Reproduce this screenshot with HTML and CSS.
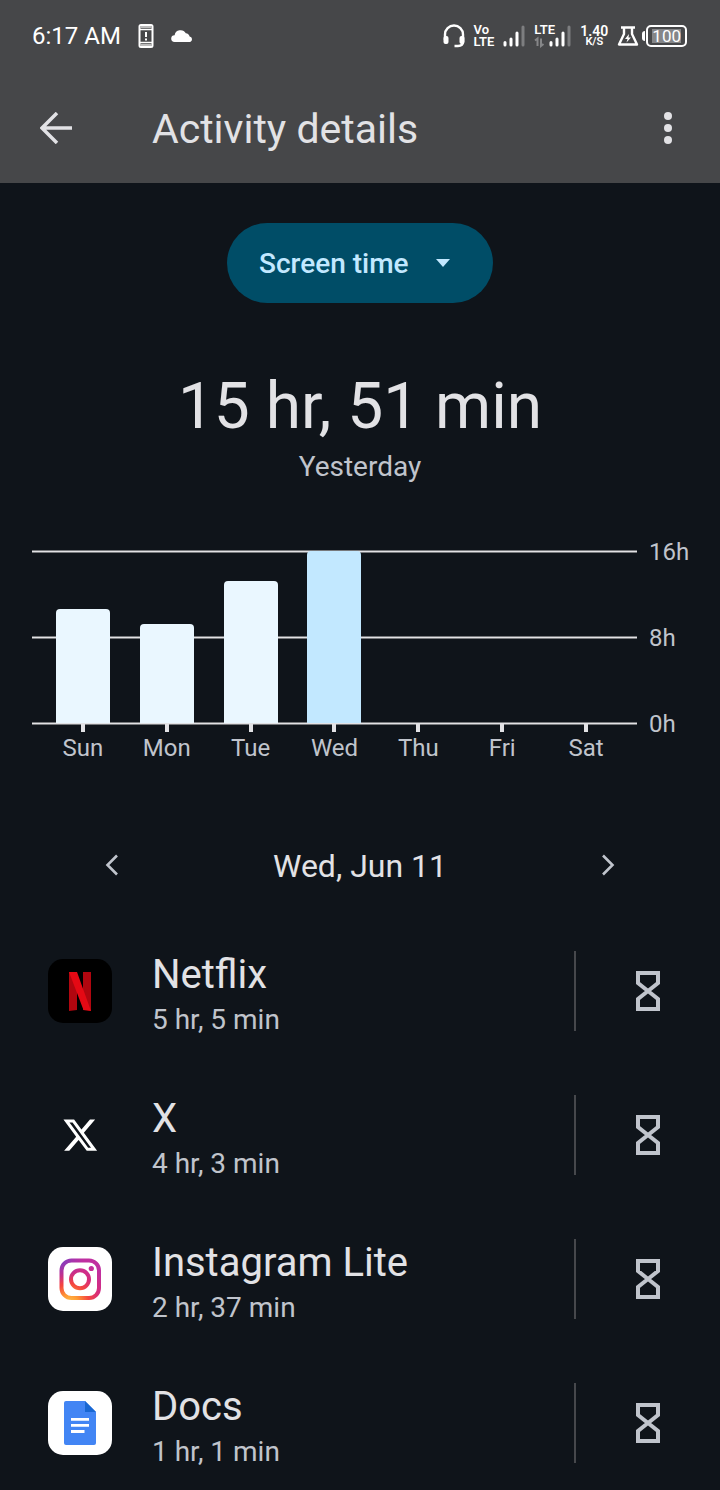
FILE: index.html
```html
<!DOCTYPE html>
<html lang="en">
<head>
<meta charset="utf-8">
<meta name="viewport" content="width=device-width, initial-scale=1">
<title>Activity details</title>
<link rel="stylesheet" href="styles.css">
</head>
<body>
<svg class="sprite" aria-hidden="true">
  <symbol id="hourglass" viewBox="0 0 26 42">
    <path d="M3 3H23V13L13 21L3 13ZM3 39H23V29L13 21L3 29Z" fill="none" stroke="currentColor" stroke-width="4"/>
  </symbol>
</svg>

<header class="top">
  <div class="status">
    <span class="clock">6:17 AM</span>
    <svg class="phone-alert" width="16" height="24" viewBox="0 0 16 24" aria-hidden="true">
      <rect x="1.500" y="1" width="13" height="22" rx="1.500" fill="none" stroke="#fff" stroke-width="2"/>
      <path d="M2 3H14M2 21H14" stroke="#bbb" stroke-width="2"/>
      <path d="M2 5.500H14M2 18.500H14" stroke="#fff" stroke-width="1.500"/>
      <path d="M8 8V13M8 14.500V16.500" stroke="#fff" stroke-width="2"/>
    </svg>
    <svg width="22" height="14" viewBox="0 0 22 14" aria-hidden="true">
      <path d="M3.600 13A3.400 3.400 0 0 1 3.600 6.200A6 6 0 0 1 14.800 4.300A4.300 4.300 0 0 1 18.600 7.600A2.800 2.800 0 0 1 19.200 13Z" fill="#fff"/>
    </svg>
    <div class="indicators">
      <svg width="22" height="24" viewBox="0 0 22 24" aria-hidden="true">
        <path d="M2 16V10.500A9 9 0 0 1 20 10.500V17.500Q20 22 15 22H11.500" fill="none" stroke="#fff" stroke-width="2.400"/>
        <rect x="0.500" y="12" width="5" height="8" rx="2" fill="#fff"/>
        <rect x="16.500" y="12" width="5" height="8" rx="2" fill="#fff"/>
      </svg>
      <span class="stack volte"><span>Vo</span><span>LTE</span></span>
      <svg width="22" height="22" viewBox="0 0 22 22" aria-hidden="true">
        <path d="M2 17.500V20M8 14V20M14 8V20" stroke="#fff" stroke-width="3" stroke-linecap="round"/>
        <path d="M20 2V20" stroke="#7d7e80" stroke-width="3" stroke-linecap="round"/>
      </svg>
      <span class="lte">
        <span class="lte-label">LTE</span>
        <svg width="37" height="24" viewBox="0 0 37 24" aria-hidden="true">
          <path d="M1 16.500L3.500 14.500V22M7 14.500V22L9.500 20" fill="none" stroke="#858688" stroke-width="2"/>
          <path d="M17 18.500V21M23 15V21M29 9V21" stroke="#fff" stroke-width="3" stroke-linecap="round"/>
          <path d="M35 3V21" stroke="#7d7e80" stroke-width="3" stroke-linecap="round"/>
        </svg>
      </span>
      <span class="stack speed"><span>1.40</span><span>K/S</span></span>
      <svg width="22" height="20" viewBox="0 0 22 20" aria-hidden="true">
        <path d="M4 1.500H18M7 2V8L2 18.500H20L15 8V2" fill="none" stroke="#fff" stroke-width="2.400" stroke-linejoin="round"/>
        <path d="M12 8L8 13H10.500L9.500 16.500L14 11.500H11.500Z" fill="#fff"/>
      </svg>
      <span class="battery"><span>100</span></span>
    </div>
  </div>
  <div class="appbar">
    <button class="icon-button back" type="button" aria-label="Back">
      <svg width="32" height="32" viewBox="0 0 32 32" aria-hidden="true">
        <path d="M32 16H2M17 1L2 16L17 31" fill="none" stroke="currentColor" stroke-width="3.500"/>
      </svg>
    </button>
    <h1>Activity details</h1>
    <button class="icon-button" type="button" aria-label="More options">
      <svg width="10" height="32" viewBox="0 0 10 32" aria-hidden="true">
        <circle cx="5" cy="4" r="4"/><circle cx="5" cy="16" r="4"/><circle cx="5" cy="28" r="4"/>
      </svg>
    </button>
  </div>
</header>

<main>
  <div class="metric">
    <select aria-label="Metric">
      <option>Screen time</option>
    </select>
    <svg width="16" height="8" viewBox="0 0 16 8" aria-hidden="true"><path d="M1 0H15L8 8Z" fill="currentColor"/></svg>
  </div>

  <p class="total">15 hr, 51 min</p>
  <p class="period">Yesterday</p>

  <section class="chart" aria-label="Screen time by day">
    <div class="plot">
      <div class="gridlines"><i></i><i></i><i></i></div>
      <div class="bars">
        <span class="bar" style="height:66%"></span>
        <span class="bar" style="height:57.500%"></span>
        <span class="bar" style="height:82.500%"></span>
        <span class="bar selected" style="height:100%"></span>
        <span class="bar" style="height:0%"></span>
        <span class="bar" style="height:0%"></span>
        <span class="bar" style="height:0%"></span>
      </div>
    </div>
    <div class="hours"><span>16h</span><span>8h</span><span>0h</span></div>
    <div class="days">
      <span>Sun</span><span>Mon</span><span>Tue</span><span>Wed</span><span>Thu</span><span>Fri</span><span>Sat</span>
    </div>
  </section>

  <nav class="date" aria-label="Day">
    <button class="icon-button" type="button" aria-label="Previous day">
      <svg width="14" height="22" viewBox="0 0 14 22" aria-hidden="true"><path d="M12 1.500L2.500 11L12 20.500" fill="none" stroke="currentColor" stroke-width="2.600"/></svg>
    </button>
    <h2>Wed, Jun 11</h2>
    <button class="icon-button" type="button" aria-label="Next day">
      <svg width="14" height="22" viewBox="0 0 14 22" aria-hidden="true"><path d="M2 1.500L11.500 11L2 20.500" fill="none" stroke="currentColor" stroke-width="2.600"/></svg>
    </button>
  </nav>

  <ul class="apps">
    <li>
      <svg class="logo" viewBox="0 0 64 64" aria-hidden="true">
        <rect width="64" height="64" rx="15" fill="#000"/>
        <path d="M21 13H29V51L21 52ZM35 13H43V52L35 51Z" fill="#b1060f"/>
        <path d="M21 13H29L43 52Q39 51 35.500 51Z" fill="#e50914"/>
      </svg>
      <div class="usage"><h3>Netflix</h3><p>5 hr, 5 min</p></div>
      <button type="button" aria-label="Set timer for Netflix"><svg width="26" height="42"><use href="#hourglass"/></svg></button>
    </li>
    <li>
      <svg class="logo" viewBox="0 0 64 64" aria-hidden="true">
        <path transform="translate(13.500 13) scale(1.560 1.600)" d="M18.244 2.250h3.308l-7.227 8.260 8.502 11.240H16.170l-5.214-6.817L4.990 21.750H1.680l7.730-8.835L1.254 2.250H8.080l4.713 6.231zm-1.161 17.520h1.833L7.084 4.126H5.117z" fill="#fff"/>
      </svg>
      <div class="usage"><h3>X</h3><p>4 hr, 3 min</p></div>
      <button type="button" aria-label="Set timer for X"><svg width="26" height="42"><use href="#hourglass"/></svg></button>
    </li>
    <li>
      <svg class="logo" viewBox="0 0 64 64" aria-hidden="true">
        <defs>
          <radialGradient id="warm" cx="0.250" cy="1.050" r="1">
            <stop offset="0" stop-color="#ffc34d"/><stop offset="0.200" stop-color="#ff9a35"/>
            <stop offset="0.450" stop-color="#f4453f"/><stop offset="0.700" stop-color="#d72c7c"/><stop offset="1" stop-color="#c02fa0"/>
          </radialGradient>
          <radialGradient id="cool" cx="0" cy="0" r="0.600">
            <stop offset="0" stop-color="#6a45c8"/><stop offset="1" stop-color="#a033b5" stop-opacity="0"/>
          </radialGradient>
          <mask id="camera">
            <rect x="13.500" y="13.500" width="37.500" height="37.500" rx="10" fill="none" stroke="#fff" stroke-width="4"/>
            <circle cx="32" cy="32.300" r="9" fill="none" stroke="#fff" stroke-width="4"/>
            <circle cx="43.300" cy="21.500" r="2.600" fill="#fff"/>
          </mask>
        </defs>
        <rect width="64" height="64" rx="15" fill="#fff"/>
        <g mask="url(#camera)">
          <rect x="11" y="11" width="43" height="43" fill="url(#warm)"/>
          <rect x="11" y="11" width="43" height="43" fill="url(#cool)"/>
        </g>
      </svg>
      <div class="usage"><h3>Instagram Lite</h3><p>2 hr, 37 min</p></div>
      <button type="button" aria-label="Set timer for Instagram Lite"><svg width="26" height="42"><use href="#hourglass"/></svg></button>
    </li>
    <li>
      <svg class="logo" viewBox="0 0 64 64" aria-hidden="true">
        <rect width="64" height="64" rx="15" fill="#fff"/>
        <path d="M18 10H37L48 21V52Q48 54 46 54H18Q16 54 16 52V12Q16 10 18 10Z" fill="#4285f4"/>
        <path d="M37 10L48 21H37Z" fill="#1967d2"/>
        <path d="M23 28.300H41M23 34.300H41M23 40.500H36.500" stroke="#fff" stroke-width="2.800"/>
      </svg>
      <div class="usage"><h3>Docs</h3><p>1 hr, 1 min</p></div>
      <button type="button" aria-label="Set timer for Docs"><svg width="26" height="42"><use href="#hourglass"/></svg></button>
    </li>
  </ul>
</main>
</body>
</html>
```

FILE: styles.css
```css
* {
  box-sizing: border-box;
}

body {
  margin: 0;
  background: #0f141a;
  color: #e2e2e5;
  font-family: Roboto, "Noto Sans", sans-serif;
}

h1, h2, h3, p, ul {
  margin: 0;
  padding: 0;
  font-weight: 400;
}

button {
  padding: 0;
  border: 0;
  background: none;
  color: inherit;
  cursor: pointer;
}

svg {
  display: block;
  flex: none;
}

.sprite {
  display: none;
}

.top {
  background: #464749;
}

/* Status bar */
.status {
  display: flex;
  align-items: center;
  height: 72px;
  padding: 0 33px 0 32px;
  color: #fff;
}

.clock {
  font-size: 24px;
}

.phone-alert {
  margin: 0 17px;
}

.indicators {
  display: flex;
  align-items: center;
  gap: 9px;
  margin-left: auto;
}

.stack {
  display: flex;
  flex-direction: column;
  font-size: 13px;
  font-weight: 600;
  line-height: 12px;
}

.speed {
  align-items: center;
  font-size: 14px;
}

.speed span + span {
  font-size: 11px;
  line-height: 10px;
}

.lte {
  display: grid;
}

.lte > * {
  grid-area: 1 / 1;
}

.lte-label {
  font-size: 13px;
  font-weight: 600;
  line-height: 12px;
}

.battery {
  display: flex;
  align-items: center;
  margin-left: -6px;
  font-size: 17px;
  line-height: 14px;
}

.battery::before {
  content: "";
  width: 3px;
  height: 10px;
  margin-right: 1px;
  border-radius: 3px 0 0 3px;
  background: #fff;
}

.battery span {
  padding: 2px 4px;
  border: 2px solid #fff;
  border-radius: 5px;
  background: #858688 content-box;
  box-shadow: inset 0 0 0 1px #464749;
}

/* App bar */
.appbar {
  display: flex;
  align-items: center;
  height: 111px;
  padding: 0 28px 0 32px;
}

.icon-button {
  display: grid;
  place-items: center;
  width: 48px;
  height: 48px;
}

.appbar svg {
  fill: currentColor;
}

.appbar h1 {
  flex: 1;
  margin-left: 72px;
  padding-top: 2px;
  font-size: 41px;
  line-height: 48px;
}

/* Metric picker */
main {
  padding-top: 40px;
}

.metric {
  display: grid;
  align-items: center;
  width: max-content;
  margin: 0 auto;
  color: #c2e8ff;
}

.metric > * {
  grid-area: 1 / 1;
}

.metric select {
  height: 80px;
  padding: 0 84px 0 32px;
  border: 0;
  border-radius: 40px;
  appearance: none;
  background: #004d67;
  color: inherit;
  font: 500 28px Roboto, "Noto Sans", sans-serif;
}

.metric svg {
  justify-self: end;
  margin-right: 42px;
  pointer-events: none;
}

.total {
  margin-top: 66px;
  font-size: 64px;
  line-height: 76px;
  text-align: center;
}

.period {
  margin-top: 7px;
  color: #c0c4cc;
  font-size: 28px;
  line-height: 30px;
  text-align: center;
}

/* Weekly chart */
.chart {
  display: grid;
  grid-template-columns: 1fr 39px;
  column-gap: 12px;
  margin-top: 58px;
  padding: 0 32px;
  color: #c0c4cc;
  font-size: 24px;
}

.plot {
  display: grid;
  height: 175px;
  margin-top: 10px;
}

.plot > * {
  grid-area: 1 / 1;
}

.gridlines {
  display: flex;
  flex-direction: column;
  justify-content: space-between;
}

.gridlines i {
  height: 3px;
  border: solid #77797c;
  border-width: 1px 0;
  background: #e2e2e5;
}

.bars {
  display: grid;
  grid-template-columns: repeat(7, 1fr);
  align-items: end;
  height: 172px;
  margin-top: 1px;
  padding: 0 9px;
}

.bar {
  width: 54px;
  justify-self: center;
  border-radius: 4px 4px 0 0;
  background: #eaf7ff;
}

.bar.selected {
  background: #c2e8ff;
}

.hours {
  display: flex;
  flex-direction: column;
  justify-content: space-between;
  height: 196px;
  line-height: 24px;
}

.days {
  display: grid;
  grid-template-columns: repeat(7, 1fr);
  margin-top: -12px;
  padding: 0 9px;
  line-height: 32px;
  text-align: center;
}

.days span::before {
  content: "";
  display: block;
  width: 4px;
  height: 8px;
  margin: 0 auto;
  background: #e2e2e5;
}

/* Day switcher */
.date {
  display: flex;
  align-items: center;
  justify-content: space-between;
  margin-top: 76px;
  padding: 0 88px;
  color: #c0c4cc;
}

.date h2 {
  padding-top: 2px;
  color: #e2e2e5;
  font-size: 32px;
  line-height: 48px;
}

/* App list */
.apps {
  display: grid;
  gap: 64px;
  padding: 61px 0 26px 48px;
  list-style: none;
}

.apps li {
  display: flex;
  align-items: center;
  height: 80px;
}

.logo {
  width: 64px;
  height: 64px;
}

.usage {
  flex: 1;
  margin-left: 40px;
  padding-top: 2px;
}

.usage h3 {
  font-size: 40px;
  line-height: 46px;
}

.usage p {
  margin-top: 10px;
  color: #c0c4cc;
  font-size: 28px;
  line-height: 24px;
}

.apps button {
  display: grid;
  place-items: center;
  width: 146px;
  height: 80px;
  border-left: 2px solid #46484c;
  color: #c0c4cc;
}
```
